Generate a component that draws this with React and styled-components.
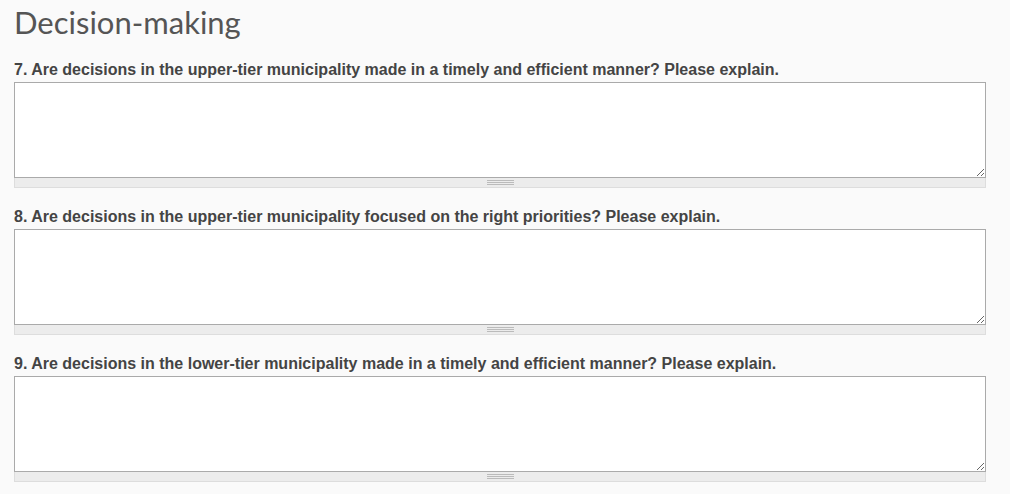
import React from "react";
import styled, { createGlobalStyle } from "styled-components";

const GlobalStyle = createGlobalStyle`
   body {
      margin: 0;
      background: #ffffff;
   }
`;

const Page = styled.div`
   width: 1010px;
   min-height: 494px;
   box-sizing: border-box;
   background: #fafafa;
   padding: 0 24px 0 14px;
`;

const Heading = styled.h2`
   margin: 0;
   padding-top: 2px;
   font-family: Lato, "Open Sans", sans-serif;
   font-weight: 400;
   font-size: 31px;
   line-height: 40px;
   color: #555555;
`;

const Question = styled.div`
   margin-top: ${(props) => (props.first ? "19px" : "20px")};
`;

const Label = styled.label`
   display: block;
   font-family: "Liberation Sans", Arial, sans-serif;
   font-weight: bold;
   font-size: 16px;
   line-height: 18px;
   color: #444444;
   margin-bottom: 3px;
`;

const Field = styled.textarea`
   display: block;
   width: 100%;
   height: 96px;
   box-sizing: border-box;
   margin: 0;
   border: 1px solid #aaaaaa;
   background: #ffffff;
   resize: vertical;
   font-family: "Liberation Sans", Arial, sans-serif;
   font-size: 14px;
   outline: none;
`;

const Grip = styled.div`
   height: 9px;
   background: #ececec;
   border: 1px solid #dddddd;
   border-top: none;
   display: flex;
   flex-direction: column;
   align-items: center;
   justify-content: center;
   gap: 1px;
`;

const GripLine = styled.span`
   display: block;
   width: 27px;
   height: 1px;
   background: #bbbbbb;
`;

const questions = [
   "7. Are decisions in the upper-tier municipality made in a timely and efficient manner? Please explain.",
   "8. Are decisions in the upper-tier municipality focused on the right priorities? Please explain.",
   "9. Are decisions in the lower-tier municipality made in a timely and efficient manner? Please explain.",
];

const App = () => {
   return (
      <>
         <GlobalStyle />
         <Page>
            <Heading>Decision-making</Heading>
            {questions.map((q, i) => (
               <Question key={i} first={i === 0}>
                  <Label>{q}</Label>
                  <Field />
                  <Grip>
                     <GripLine />
                     <GripLine />
                     <GripLine />
                  </Grip>
               </Question>
            ))}
         </Page>
      </>
   );
};

export default App;
